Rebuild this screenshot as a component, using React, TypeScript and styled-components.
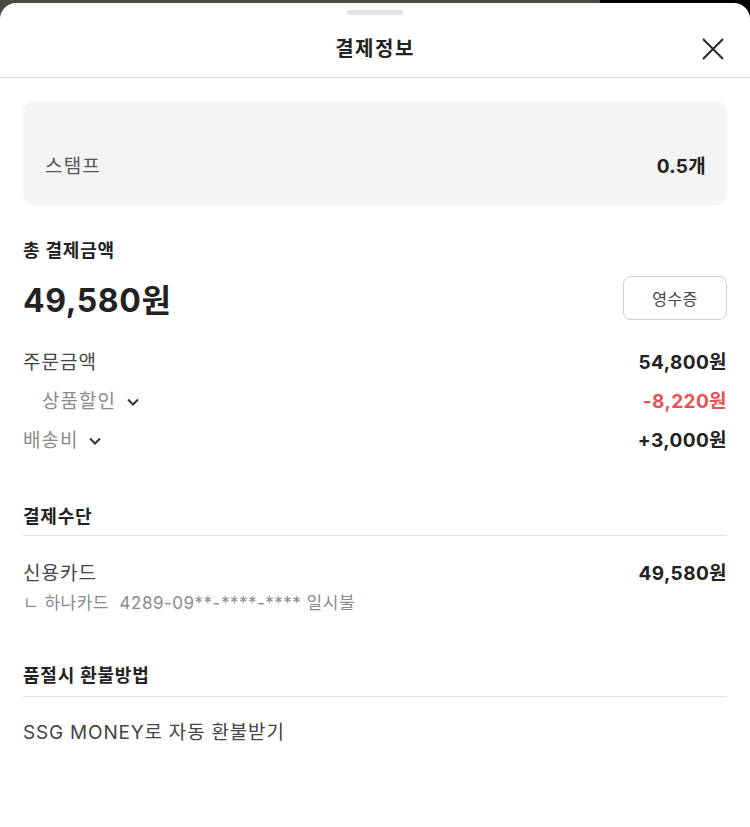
import styled, { createGlobalStyle } from 'styled-components';

const GlobalStyle = createGlobalStyle`
  html, body {
    margin: 0;
    padding: 0;
    background: #4a4944;
  }
  body {
    font-family: Inter, 'Noto Sans CJK KR', 'Noto Sans', sans-serif;
    color: #222;
  }
`;

const Backdrop = styled.div`
  width: 750px;
  height: 827px;
  background: linear-gradient(to right, #4a4944 600px, #000 600px);
  padding-top: 3px;
  box-sizing: border-box;
`;

const Sheet = styled.div`
  background: #fff;
  height: 100%;
  border-radius: 16px 16px 0 0;
  position: relative;
`;

const Handle = styled.div`
  width: 56px;
  height: 5px;
  border-radius: 3px;
  background: #e3e3e3;
  position: absolute;
  top: 7px;
  left: 347px;
`;

const Header = styled.header`
  height: 75px;
  box-sizing: border-box;
  padding-top: 17px;
  display: flex;
  align-items: center;
  justify-content: center;
  border-bottom: 1px solid #dcdcdc;
  position: relative;
`;

const Title = styled.h1`
  margin: 0;
  font-size: 20px;
  line-height: 28px;
  font-weight: 700;
  letter-spacing: 1.5px;
`;

const Close = styled.button`
  position: absolute;
  right: 24px;
  top: 33px;
  width: 26px;
  height: 26px;
  padding: 0;
  border: 0;
  background: none;
  display: flex;
  align-items: center;
  justify-content: center;
`;

const Body = styled.div`
  padding: 23px 23px 0;
`;

const StampBox = styled.div`
  background: #f4f4f4;
  border-radius: 12px;
  height: 104px;
  box-sizing: border-box;
  padding: 53px 21px 0 22px;
  display: flex;
  justify-content: space-between;
  align-items: flex-start;
`;

const StampLabel = styled.span`
  font-size: 19px;
  line-height: 26px;
  color: #555;
  letter-spacing: 1.2px;
`;

const StampValue = styled.span`
  font-size: 19px;
  line-height: 26px;
  font-weight: 700;
  letter-spacing: 0.3px;
`;

const SectionTitle = styled.h2<{ $line?: boolean; $pad?: number }>`
  margin: 0;
  font-size: 18px;
  line-height: 26px;
  font-weight: 700;
  letter-spacing: 0.8px;
  padding-bottom: ${(p) => p.$pad ?? 0}px;
  border-bottom: ${(p) => (p.$line ? '1px solid #e2e2e2' : 'none')};
`;

const Section = styled.section<{ $top: number }>`
  margin-top: ${(p) => p.$top}px;
`;

const TotalRow = styled.div`
  display: flex;
  justify-content: space-between;
  align-items: flex-start;
  margin-top: 12px;
`;

const TotalAmount = styled.span`
  font-size: 32px;
  line-height: 44px;
  padding-top: 3px;
  font-weight: 700;
  letter-spacing: 0.6px;
`;

const ReceiptButton = styled.button`
  width: 104px;
  height: 44px;
  border: 1px solid #cfcfcf;
  border-radius: 8px;
  background: #fff;
  font-family: inherit;
  font-size: 16px;
  color: #444;
  letter-spacing: 0.5px;
`;

const Rows = styled.div`
  margin-top: 26px;
  display: flex;
  flex-direction: column;
  gap: 11px;
`;

const Row = styled.div<{ $indent?: boolean }>`
  display: flex;
  justify-content: space-between;
  align-items: center;
  height: 28px;
  padding-left: ${(p) => (p.$indent ? '19px' : '0')};
`;

const Label = styled.span<{ $muted?: boolean }>`
  font-size: 19px;
  line-height: 28px;
  color: ${(p) => (p.$muted ? '#8a8a8a' : '#444')};
  letter-spacing: 1px;
  display: flex;
  align-items: center;
  gap: 10px;
`;

const Amount = styled.span<{ $red?: boolean }>`
  font-size: 19px;
  line-height: 28px;
  font-weight: 700;
  color: ${(p) => (p.$red ? '#ec4f4f' : '#222')};
  letter-spacing: 0.4px;
`;

const PayRow = styled.div`
  display: flex;
  justify-content: space-between;
  align-items: flex-start;
  margin-top: 24px;
`;

const PayMethod = styled.div`
  display: flex;
  flex-direction: column;
  gap: 3px;
`;

const SubText = styled.span`
  font-size: 17px;
  line-height: 24px;
  color: #8a8a8a;
  letter-spacing: 0.5px;
`;

const Plain = styled.p`
  margin: 22px 0 0;
  font-size: 19px;
  line-height: 28px;
  color: #444;
  letter-spacing: 0.8px;
`;

function Chevron() {
  return (
    <svg width="14" height="10" viewBox="0 0 14 10" fill="none">
      <path d="M2 2.5L7 7.5L12 2.5" stroke="#333" strokeWidth="2" />
    </svg>
  );
}

export default function App() {
  return (
    <>
      <GlobalStyle />
      <Backdrop>
        <Sheet>
          <Handle />
          <Header>
            <Title>결제정보</Title>
            <Close aria-label="닫기">
              <svg width="24" height="24" viewBox="0 0 24 24" fill="none">
                <path d="M2 2L22 22M22 2L2 22" stroke="#222" strokeWidth="1.8" />
              </svg>
            </Close>
          </Header>
          <Body>
            <StampBox>
              <StampLabel>스탬프</StampLabel>
              <StampValue>0.5개</StampValue>
            </StampBox>

            <Section $top={33}>
              <SectionTitle>총 결제금액</SectionTitle>
              <TotalRow>
                <TotalAmount>49,580원</TotalAmount>
                <ReceiptButton>영수증</ReceiptButton>
              </TotalRow>
              <Rows>
                <Row>
                  <Label>주문금액</Label>
                  <Amount>54,800원</Amount>
                </Row>
                <Row $indent>
                  <Label $muted>
                    상품할인 <Chevron />
                  </Label>
                  <Amount $red>-8,220원</Amount>
                </Row>
                <Row>
                  <Label $muted>
                    배송비 <Chevron />
                  </Label>
                  <Amount>+3,000원</Amount>
                </Row>
              </Rows>
            </Section>

            <Section $top={49}>
              <SectionTitle $line $pad={5}>결제수단</SectionTitle>
              <PayRow>
                <PayMethod>
                  <Label>신용카드</Label>
                  <SubText>ㄴ 하나카드&nbsp;&nbsp;4289-09**-****-**** 일시불</SubText>
                </PayMethod>
                <Amount>49,580원</Amount>
              </PayRow>
            </Section>

            <Section $top={48}>
              <SectionTitle $line $pad={7}>품절시 환불방법</SectionTitle>
              <Plain>SSG MONEY로 자동 환불받기</Plain>
            </Section>
          </Body>
        </Sheet>
      </Backdrop>
    </>
  );
}
